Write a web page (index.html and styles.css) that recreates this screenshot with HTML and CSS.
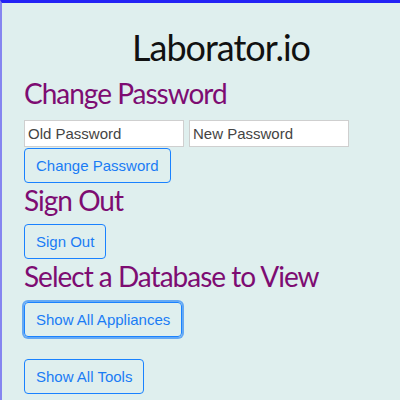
FILE: index.html
```html
<!DOCTYPE html>
<html>
<head>
<meta charset="utf-8">
<link rel="stylesheet" href="styles.css">
</head>
<body>
<div class="page">
  <h1 class="title">Laborator.io</h1>
  <h3 class="section">Change Password</h3>
  <div class="pw-row">
    <input class="field" type="text" placeholder="Old Password">
    <input class="field" type="text" placeholder="New Password">
  </div>
  <button class="btn">Change Password</button>
  <h3 class="section">Sign Out</h3>
  <div class="row"><button class="btn">Sign Out</button></div>
  <h3 class="section">Select a Database to View</h3>
  <div class="db-list">
    <button class="btn focused">Show All Appliances</button>
    <button class="btn">Show All Tools</button>
  </div>
  <h3 class="section">Add Appliance</h3>
</div>
</body>
</html>
```
FILE: styles.css
```css
html, body {
  margin: 0;
  padding: 0;
  height: 100%;
  overflow: hidden;
}
body {
  background: #dfefee;
  font-family: "Liberation Sans", Arial, sans-serif;
}
.page {
  box-sizing: border-box;
  min-height: 100%;
  border-top: 3px solid #2323f5;
  border-left: 2px solid #8585f0;
  padding: 0 0 0 22px;
  display: flex;
  flex-direction: column;
  align-items: flex-start;
}
.title {
  align-self: stretch;
  margin: 24px 0 0 0;
  padding-left: 18px;
  text-align: center;
  font-family: Lato, sans-serif;
  font-weight: 400;
  font-size: 36px;
  line-height: 40px;
  letter-spacing: -1px;
  color: #111;
}
.section {
  margin: 0;
  font-family: Lato, sans-serif;
  font-weight: 400;
  font-size: 28px;
  line-height: 34px;
  letter-spacing: -1px;
  color: #7d0c72;
}
.title + .section {
  margin-top: 9px;
}
.pw-row {
  display: flex;
  gap: 5px;
  margin-top: 10px;
}
.field {
  box-sizing: border-box;
  width: 160px;
  height: 27px;
  margin: 0;
  padding: 0 3px;
  border: 1px solid #cfcfcf;
  background: #fff;
  font-family: "Liberation Sans", Arial, sans-serif;
  font-size: 15px;
  color: #444;
}
.field::placeholder {
  color: #444;
  opacity: 1;
}
.btn {
  box-sizing: border-box;
  height: 35px;
  margin: 1px 0 0 0;
  padding: 0 11px;
  border: 1px solid #1a82ff;
  border-radius: 4px;
  background: transparent;
  color: #1a7cf5;
  font-family: "Liberation Sans", Arial, sans-serif;
  font-size: 15px;
}
.row {
  margin-top: 6px;
}
.db-list {
  display: flex;
  flex-direction: column;
  align-items: flex-start;
  gap: 21px;
  margin-top: 8px;
}
.focused {
  box-shadow: 0 0 0 2px rgba(60, 145, 245, 0.75);
}
```
